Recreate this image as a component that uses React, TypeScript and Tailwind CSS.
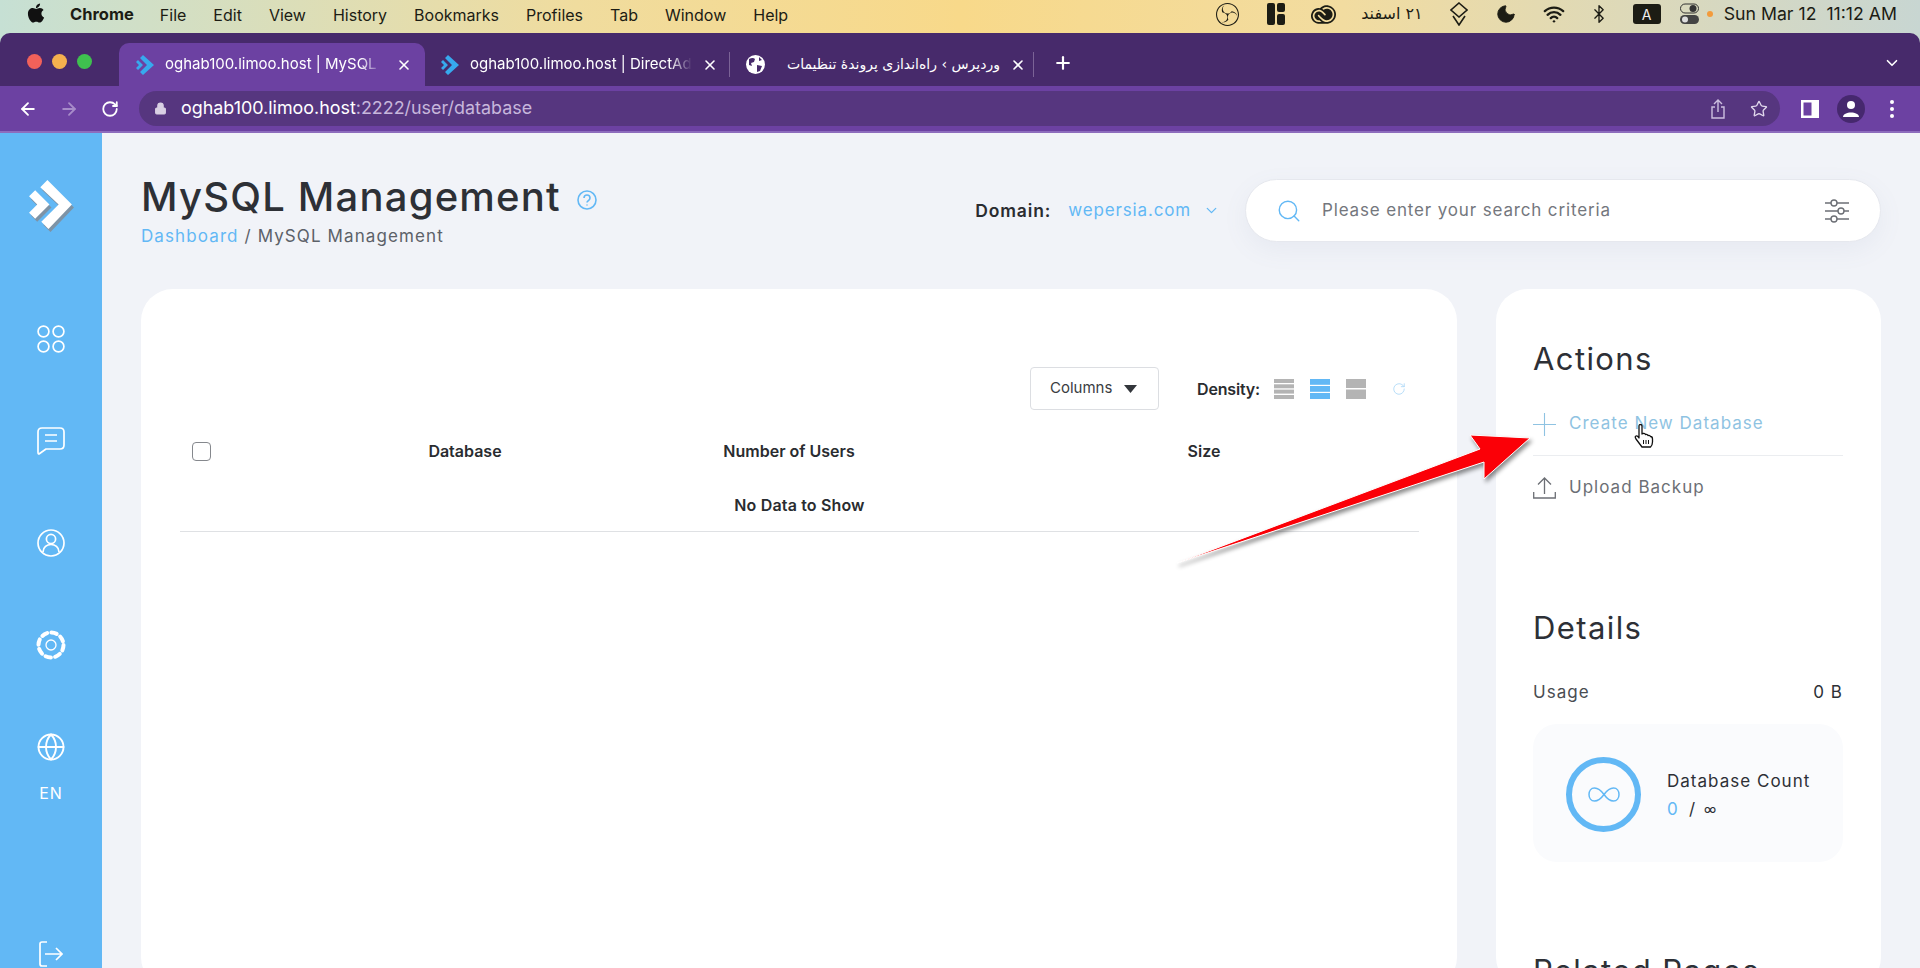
import React from 'react';
import { ArrowLeft, ArrowRight, RotateCw, Lock, Star, X, Plus, ChevronDown, Search, Globe, Bluetooth, Wifi, Moon } from 'lucide-react';
import { FaApple } from 'react-icons/fa';
import { SiAdobecreativecloud, SiObsstudio } from 'react-icons/si';

const menuItems = ['File', 'Edit', 'View', 'History', 'Bookmarks', 'Profiles', 'Tab', 'Window', 'Help'];

const Favicon: React.FC = () => (
  <svg width="18" height="22" viewBox="0 0 18 22" className="shrink-0">
    <path d="M7 1 L18 11 L7 21 L4 18 L11 11 L4 4 Z" fill="#37a9ee" />
    <path d="M2 6 L7 11 L2 16 L0 14 L3 11 L0 8 Z" fill="#37a9ee" />
  </svg>
);

const MenuBar: React.FC = () => (
  <div className="h-[33px] flex items-center pl-[25px] pr-[23px] pb-[4px] text-[16px] text-[#1c1c14] shrink-0">
    <FaApple size={22} className="mb-[3px] text-[#111]" />
    <span className="ml-[23px] font-bold text-[16.5px]">Chrome</span>
    <div className="flex ml-[26px] gap-[27px]">
      {menuItems.map((m) => (
        <span key={m}>{m}</span>
      ))}
    </div>
    <div className="ml-auto flex items-center">
      <SiObsstudio size={23} className="shrink-0" />
      <svg width="18" height="22" viewBox="0 0 18 22" className="ml-[28px] shrink-0">
        <rect x="0" y="0" width="8" height="22" rx="2" fill="#1c1c14" />
        <rect x="10" y="0" width="8" height="9" rx="2" fill="#1c1c14" />
        <rect x="10" y="11" width="8" height="11" rx="2" fill="#1c1c14" />
      </svg>
      <SiAdobecreativecloud size={25} className="ml-[26px] shrink-0" />
      <span className="ml-[28px] w-[59px] shrink-0 text-[16px] font-['DejaVu_Sans',sans-serif] whitespace-nowrap" dir="rtl">۲۱ اسفند</span>
      <svg width="18" height="24" viewBox="0 0 18 24" className="ml-[27px] shrink-0" fill="none" stroke="#1c1c14" strokeWidth="1.6">
        <path d="M9 1 L17 8 L9 15 L1 8 Z" />
        <path d="M3 14 L9 23 L15 14" />
      </svg>
      <Moon size={22} fill="#1c1c14" strokeWidth={1} className="ml-[27px] shrink-0" />
      <Wifi size={22} strokeWidth={2.6} className="ml-[26px] shrink-0" />
      <Bluetooth size={20} strokeWidth={1.6} className="ml-[24px] shrink-0" />
      <span className="ml-[24px] w-[28px] h-[20px] shrink-0 bg-[#1c1c14] rounded-[3px] text-[#eee] text-[14px] flex items-center justify-center">A</span>
      <svg width="19" height="22" viewBox="0 0 19 22" className="ml-[19px] shrink-0">
        <rect x="0.5" y="1" width="18" height="9" rx="4.5" fill="none" stroke="#333" />
        <circle cx="13" cy="5.5" r="3.5" fill="#333" />
        <rect x="0" y="12" width="19" height="9" rx="4.5" fill="#444" />
        <circle cx="5" cy="16.5" r="3" fill="#ddd" />
      </svg>
      <span className="ml-[8px] w-[6px] h-[6px] shrink-0 rounded-full bg-[#f39b3c]" />
      <span className="ml-[11px] whitespace-nowrap text-[17.7px]">Sun Mar 12&nbsp;&nbsp;11:12 AM</span>
    </div>
  </div>
);

const TabStrip: React.FC = () => (
  <div className="h-[53px] bg-[#472a6b] rounded-t-[10px] flex items-end text-white text-[15px] shrink-0 relative">
    <div className="flex items-center gap-[10px] pl-[27px] h-[43px] mb-[3px]">
      <span className="w-[15px] h-[15px] rounded-full bg-[#f2615a]" />
      <span className="w-[15px] h-[15px] rounded-full bg-[#f5b04e]" />
      <span className="w-[15px] h-[15px] rounded-full bg-[#3fc04f]" />
    </div>
    <div className="ml-[27px] w-[306px] h-[43px] bg-[#6c41a2] rounded-t-[10px] flex items-center pl-[17px] pr-[13px]">
      <Favicon />
      <span className="ml-[11px] w-[217px] overflow-hidden whitespace-nowrap [mask-image:linear-gradient(to_right,black_90%,transparent)]">oghab100.limoo.host | MySQL Management</span>
      <X size={16} className="ml-auto shrink-0" strokeWidth={2.4} />
    </div>
    <div className="w-[305px] h-[43px] flex items-center pl-[16px] pr-[12px] relative">
      <Favicon />
      <span className="ml-[11px] w-[222px] overflow-hidden whitespace-nowrap [mask-image:linear-gradient(to_right,black_90%,transparent)]">oghab100.limoo.host | DirectAdmin</span>
      <X size={16} className="ml-auto shrink-0" strokeWidth={2.4} />
      <span className="absolute right-0 top-[9px] w-px h-[25px] bg-[#7b6396]" />
    </div>
    <div className="w-[304px] h-[43px] flex items-center pl-[16px] pr-[13px] relative">
      <svg width="19" height="19" viewBox="0 0 19 19" className="shrink-0">
        <circle cx="9.5" cy="9.5" r="9.5" fill="#fff" />
        <path d="M3 4 Q7 2 9 4 L8 7 L5 8 L6 11 L3 10 Z M11 10 L16 11 L14 16 L11 17 Z M13 2 L16 5 L13 6 Z" fill="#472a6b" />
      </svg>
      <span className="ml-[22px] flex-1 text-[14px] whitespace-nowrap font-['DejaVu_Sans',sans-serif]" dir="rtl">وردپرس › راه‌اندازی پروندهٔ تنظیمات</span>
      <X size={16} className="ml-[10px] shrink-0" strokeWidth={2.4} />
      <span className="absolute right-0 top-[9px] w-px h-[25px] bg-[#7b6396]" />
    </div>
    <Plus size={20} strokeWidth={2.6} className="ml-[19px] mb-[13px]" />
    <ChevronDown size={18} strokeWidth={2.2} className="ml-auto mr-[19px] mb-[14px]" />
  </div>
);

const Toolbar: React.FC = () => (
  <div className="h-[47px] bg-[#6c41a2] border-b-2 border-[#8d6cbd] flex items-center shrink-0 text-white">
    <ArrowLeft size={20} className="ml-[18px]" strokeWidth={2.2} />
    <ArrowRight size={20} className="ml-[21px] text-[#a78cc9]" strokeWidth={2.2} />
    <RotateCw size={18} className="ml-[22px]" strokeWidth={2.4} />
    <div className="ml-[20px] w-[1641px] h-[35px] rounded-full bg-[#56367f] flex items-center pl-[15px] pr-[12px]">
      <Lock size={13} fill="#d9d0e4" className="text-[#d9d0e4]" />
      <span className="ml-[14px] text-[17.9px] whitespace-nowrap">
        oghab100.limoo.host<span className="text-[#c7b7dc]">:2222/user/database</span>
      </span>
      <svg width="16" height="20" viewBox="0 0 16 20" fill="none" stroke="#cdbfe0" strokeWidth="1.4" className="ml-auto">
        <path d="M8 13 V1 M4 5 L8 1 L12 5 M5 8 H2 V19 H14 V8 H11" />
      </svg>
      <Star size={18} strokeWidth={1.8} className="ml-[24px] text-[#e0d7ec]" />
    </div>
    <svg width="18" height="18" viewBox="0 0 18 18" className="ml-[21px]">
      <rect x="0" y="0" width="18" height="18" fill="#fff" />
      <rect x="2.5" y="2.5" width="8" height="13" fill="#6c41a2" />
    </svg>
    <div className="ml-[18px] w-[28px] h-[28px] rounded-full bg-[#46286e] flex items-center justify-center">
      <svg width="18" height="18" viewBox="0 0 18 18" fill="#fff">
        <circle cx="9" cy="5" r="4" />
        <path d="M1 17 C1 11 17 11 17 17 Z" />
      </svg>
    </div>
    <div className="ml-[25px] flex flex-col gap-[3px]">
      <span className="w-[4px] h-[4px] rounded-full bg-white" />
      <span className="w-[4px] h-[4px] rounded-full bg-white" />
      <span className="w-[4px] h-[4px] rounded-full bg-white" />
    </div>
  </div>
);

const Sidebar: React.FC = () => (
  <div className="w-[102px] h-full shrink-0 bg-[#62b8f5] flex flex-col items-center text-white overflow-hidden pt-[47px]">
    <svg width="45" height="51" viewBox="0 0 44 50" className="shrink-0 overflow-visible">
      <g fill="#7d93a6" transform="translate(2 3)">
        <path d="M18 0 L42 24 L19 48 L12 41 L29 24 L11 7 Z" />
        <path d="M6 10 L20 24 L6 38 L0 32 L8 24 L0 16 Z" />
      </g>
      <path d="M18 0 L42 24 L19 48 L12 41 L29 24 L11 7 Z" fill="#fff" />
      <path d="M6 10 L20 24 L6 38 L0 32 L8 24 L0 16 Z" fill="#fff" />
    </svg>
    <svg width="28" height="28" viewBox="0 0 28 28" fill="none" stroke="#fff" strokeWidth="1.7" className="mt-[94px] shrink-0">
      <circle cx="6.5" cy="6.5" r="5.4" />
      <circle cx="21.5" cy="6.5" r="5.4" />
      <circle cx="6.5" cy="21.5" r="5.4" />
      <circle cx="21.5" cy="21.5" r="5.4" />
    </svg>
    <svg width="28" height="28" viewBox="0 0 28 28" fill="none" stroke="#fff" strokeWidth="1.7" className="mt-[74px] shrink-0">
      <path d="M1 5 Q1 1 5 1 H23 Q27 1 27 5 V18 Q27 22 23 22 H9 L2 27 Q1 27 1 25 Z" strokeLinejoin="round" />
      <path d="M8 8 H20 M8 14 H20" />
    </svg>
    <svg width="28" height="28" viewBox="0 0 28 28" fill="none" stroke="#fff" strokeWidth="1.7" className="mt-[74px] shrink-0">
      <circle cx="14" cy="14" r="13" />
      <circle cx="14" cy="10" r="4.6" />
      <path d="M6 23 C6 13 22 13 22 23" />
    </svg>
    <svg width="30" height="30" viewBox="0 0 30 30" fill="none" stroke="#fff" className="mt-[73px] shrink-0">
      <circle cx="15" cy="15" r="12.5" strokeWidth="4" strokeDasharray="5.5 4.32" strokeLinecap="round" />
      <circle cx="15" cy="15" r="5" strokeWidth="1.3" />
    </svg>
    <Globe size={30} strokeWidth={1.5} className="mt-[72px] shrink-0" />
    <span className="mt-[21px] text-[16px] leading-[20px] tracking-[0.06em] font-['Inter',sans-serif] shrink-0">EN</span>
    <svg width="24" height="26" viewBox="0 0 24 26" fill="none" stroke="#fff" strokeWidth="1.7" className="mt-[138px] shrink-0">
      <path d="M8 1 H3 Q1 1 1 3 V23 Q1 25 3 25 H8" />
      <path d="M6 13 H23 M17 7 L23 13 L17 19" />
    </svg>
  </div>
);

const Header: React.FC = () => (
  <div className="flex items-start h-[115px]">
    <div>
      <div className="flex items-center">
        <h1 className="text-[40px] leading-[46px] font-medium text-[#2d3036] tracking-[0.03em] whitespace-nowrap">MySQL Management</h1>
        <svg width="20" height="20" viewBox="0 0 20 20" fill="none" stroke="#62b8f5" strokeWidth="1.6" className="ml-[16px] mt-[6px]">
          <circle cx="10" cy="10" r="9" />
          <path d="M7 8 C7 4 13 4 13 8 C13 10.5 10 10.5 10 12.5 M10 14.5 V15.5" />
        </svg>
      </div>
      <div className="mt-[4px] text-[17px] leading-[24px] tracking-[0.065em] text-[#5c6168] whitespace-nowrap">
        <span className="text-[#62b8f5]">Dashboard</span> / MySQL Management
      </div>
    </div>
    <div className="ml-auto flex items-center mt-[5px]">
      <span className="pt-[1px] text-[17.5px] font-semibold text-[#2a2c30] tracking-[0.05em]">Domain:</span>
      <span className="pt-[1px] ml-[17px] text-[17px] text-[#62b8f5] tracking-[0.05em]">wepersia.com</span>
      <ChevronDown size={17} className="ml-[12px] text-[#62b8f5]" strokeWidth={1.8} />
      <div className="ml-[25px] w-[636px] h-[63px] rounded-[32px] bg-white border border-[#e6e8ee] shadow-[0_8px_24px_rgba(120,130,170,0.08)] flex items-center pl-[30px] pr-[31px]">
        <Search size={26} strokeWidth={1.3} className="text-[#62b8f5]" />
        <span className="pt-[1px] ml-[20px] text-[17px] text-[#74777d] tracking-[0.05em]">Please enter your search criteria</span>
        <svg width="24" height="24" viewBox="0 0 24 24" fill="none" stroke="#6c6f75" strokeWidth="1.4" className="ml-auto">
          <path d="M0 4 H6 M12 4 H24 M0 12 H13 M19 12 H24 M0 20 H6 M12 20 H24" />
          <circle cx="9" cy="4" r="3" />
          <circle cx="16" cy="12" r="3" />
          <circle cx="9" cy="20" r="3" />
        </svg>
      </div>
    </div>
  </div>
);

const TableCard: React.FC = () => (
  <div className="flex-1 h-[700px] bg-white rounded-[32px] pl-[39px] pr-[38px] pt-[78px]">
    <div className="flex items-center justify-end pr-[13px]">
      <button className="w-[129px] h-[43px] border border-[#dcdee2] rounded-[4px] flex items-center pl-[19px] text-[15px] text-[#3a3d42]">
        Columns
        <svg width="13" height="8" viewBox="0 0 13 8" className="ml-[12px]">
          <path d="M0 0 H13 L6.5 8 Z" fill="#33363b" />
        </svg>
      </button>
      <span className="ml-[38px] text-[16px] font-semibold text-[#2a2c30] tracking-[-0.01em]">Density:</span>
      <svg width="20" height="20" viewBox="0 0 20 20" fill="#b4b4b4" className="ml-[14px]">
        <rect y="0" width="20" height="4" />
        <rect y="5.3" width="20" height="4" />
        <rect y="10.6" width="20" height="4" />
        <rect y="16" width="20" height="4" />
      </svg>
      <svg width="20" height="20" viewBox="0 0 20 20" fill="#62b8f5" className="ml-[16px]">
        <rect y="0" width="20" height="5.8" />
        <rect y="7" width="20" height="5.8" />
        <rect y="14" width="20" height="6" />
      </svg>
      <svg width="20" height="20" viewBox="0 0 20 20" fill="#b4b4b4" className="ml-[16px]">
        <rect y="0" width="20" height="9" />
        <rect y="10.5" width="20" height="9.5" />
      </svg>
      <RotateCw size={14} strokeWidth={1.4} className="ml-[26px] text-[#a9d7f6]" />
    </div>
    <div className="mt-[19px] grid grid-cols-[161px_248px_400px_430px] h-[44px] items-center text-[16px] font-semibold text-[#2a2c30]">
      <span className="pl-[12px]">
        <span className="block w-[19px] h-[19px] rounded-[4px] border border-[#85888d]" />
      </span>
      <span className="text-center">Database</span>
      <span className="text-center">Number of Users</span>
      <span className="text-center">Size</span>
    </div>
    <div className="h-[59px] border-b border-[#dfe1e4] pt-[6px] flex items-center justify-center text-[16px] tracking-[0.01em] font-semibold text-[#2a2c30]">
      No Data to Show
    </div>
  </div>
);

const SideCard: React.FC = () => (
  <div className="w-[385px] h-[700px] shrink-0 bg-white rounded-[32px] pl-[37px] pr-[38px] pt-[52px]">
    <h2 className="text-[31px] leading-[36px] text-[#2d3036] tracking-[0.045em]">Actions</h2>
    <div className="mt-[29px] h-[36px] flex items-center text-[17px] tracking-[0.06em] text-[#8fc3e2]">
      <svg width="23" height="23" viewBox="0 0 23 23" fill="none" stroke="#8fc3e2" strokeWidth="1.1">
        <path d="M11.5 0 V23 M0 11.5 H23" />
      </svg>
      <span className="ml-[13px]">Create New Database</span>
    </div>
    <div className="mt-[13px] h-px bg-[#ebedf0]" />
    <div className="mt-[14px] h-[36px] flex items-center text-[17px] tracking-[0.06em] text-[#6c6f75]">
      <svg width="23" height="22" viewBox="0 0 23 22" fill="none" stroke="#6c6f75" strokeWidth="1.3">
        <path d="M11.5 17 V1 M5 7.5 L11.5 1 L18 7.5 M0.7 15 V21 H22.3 V15" />
      </svg>
      <span className="ml-[13px]">Upload Backup</span>
    </div>
    <h2 className="mt-[104px] text-[31px] leading-[36px] text-[#2d3036] tracking-[0.045em]">Details</h2>
    <div className="mt-[34px] flex justify-between text-[17px] leading-[24px] tracking-[0.06em] text-[#4a4d52]">
      <span>Usage</span>
      <span className="text-[#2d3036]">0 B</span>
    </div>
    <div className="mt-[20px] h-[138px] rounded-[24px] bg-[#fafbfd] flex items-center pl-[33px] pt-[2px]">
      <div className="w-[75px] h-[75px] rounded-full border-[6px] border-[#62b8f5] flex items-center justify-center shrink-0">
        <svg width="32" height="15" viewBox="0 0 32 15" fill="none" stroke="#62b8f5" strokeWidth="1.5">
          <path d="M16 7.5 C12 2 9 1 6.5 1 C3 1 1 4 1 7.5 C1 11 3 14 6.5 14 C9 14 12 13 16 7.5 C20 2 23 1 25.5 1 C29 1 31 4 31 7.5 C31 11 29 14 25.5 14 C23 14 20 13 16 7.5 Z" />
        </svg>
      </div>
      <div className="ml-[26px] pt-[2px]">
        <div className="text-[17px] leading-[24px] tracking-[0.06em] text-[#2d3036] whitespace-nowrap">Database Count</div>
        <div className="mt-[4px] text-[17px] leading-[24px] flex items-center text-[#2d3036]">
          <span className="text-[#62b8f5] w-[22px]">0</span>
          <span className="w-[15px]">/</span>
          <span className="text-[13px]">∞</span>
        </div>
      </div>
    </div>
    <h2 className="mt-[91px] text-[31px] leading-[36px] text-[#2d3036] tracking-[0.045em] whitespace-nowrap">Related Pages</h2>
  </div>
);

export default function App() {
  return (
    <div className="relative w-[1920px] h-[968px] overflow-hidden flex flex-col font-['Inter',sans-serif] bg-[linear-gradient(90deg,#c6e0d4_0%,#f0dc9e_30%,#f8d98a_50%,#f2dca0_70%,#c8d6d2_100%)]">
      <MenuBar />
      <TabStrip />
      <Toolbar />
      <div className="flex-1 min-h-0 flex bg-[#f1f3f8]">
        <Sidebar />
        <div className="flex-1 min-w-0 pl-[39px] pr-[39px] pt-[41px] overflow-hidden">
          <Header />
          <div className="flex gap-[39px]">
            <TableCard />
            <SideCard />
          </div>
        </div>
      </div>

      {/* red annotation arrow drawn over the page */}
      <svg className="absolute left-[1170px] top-[430px] drop-shadow-[2px_3px_2px_rgba(0,0,0,0.45)]" width="370" height="140" viewBox="1170 430 370 140">
        <polygon points="1177,563 1480,449 1470,435 1530,438 1484,479 1484,462" fill="#fb0007" stroke="#fff" strokeWidth="1" />
      </svg>

      {/* mouse pointer */}
      <svg className="absolute left-[1634px] top-[424px]" width="20" height="24" viewBox="0 0 20 24">
        <path d="M5 2 Q5 0.5 6.5 0.5 Q8 0.5 8 2 V10 L9 9.5 Q11 9 11.5 10.5 Q13.5 10 14 11.5 Q16 11 16.5 12.5 Q18.5 12.5 18.5 15 V18 Q18.5 21 16.5 23 H8 L2 15 Q0.5 12.5 2 12 Q3.5 11.5 5 14 Z" fill="#fff" stroke="#111" strokeWidth="1.3" strokeLinejoin="round" />
        <path d="M9.5 16 V20 M12 16 V20 M14.5 16 V20" stroke="#111" strokeWidth="1" />
      </svg>
    </div>
  );
}
